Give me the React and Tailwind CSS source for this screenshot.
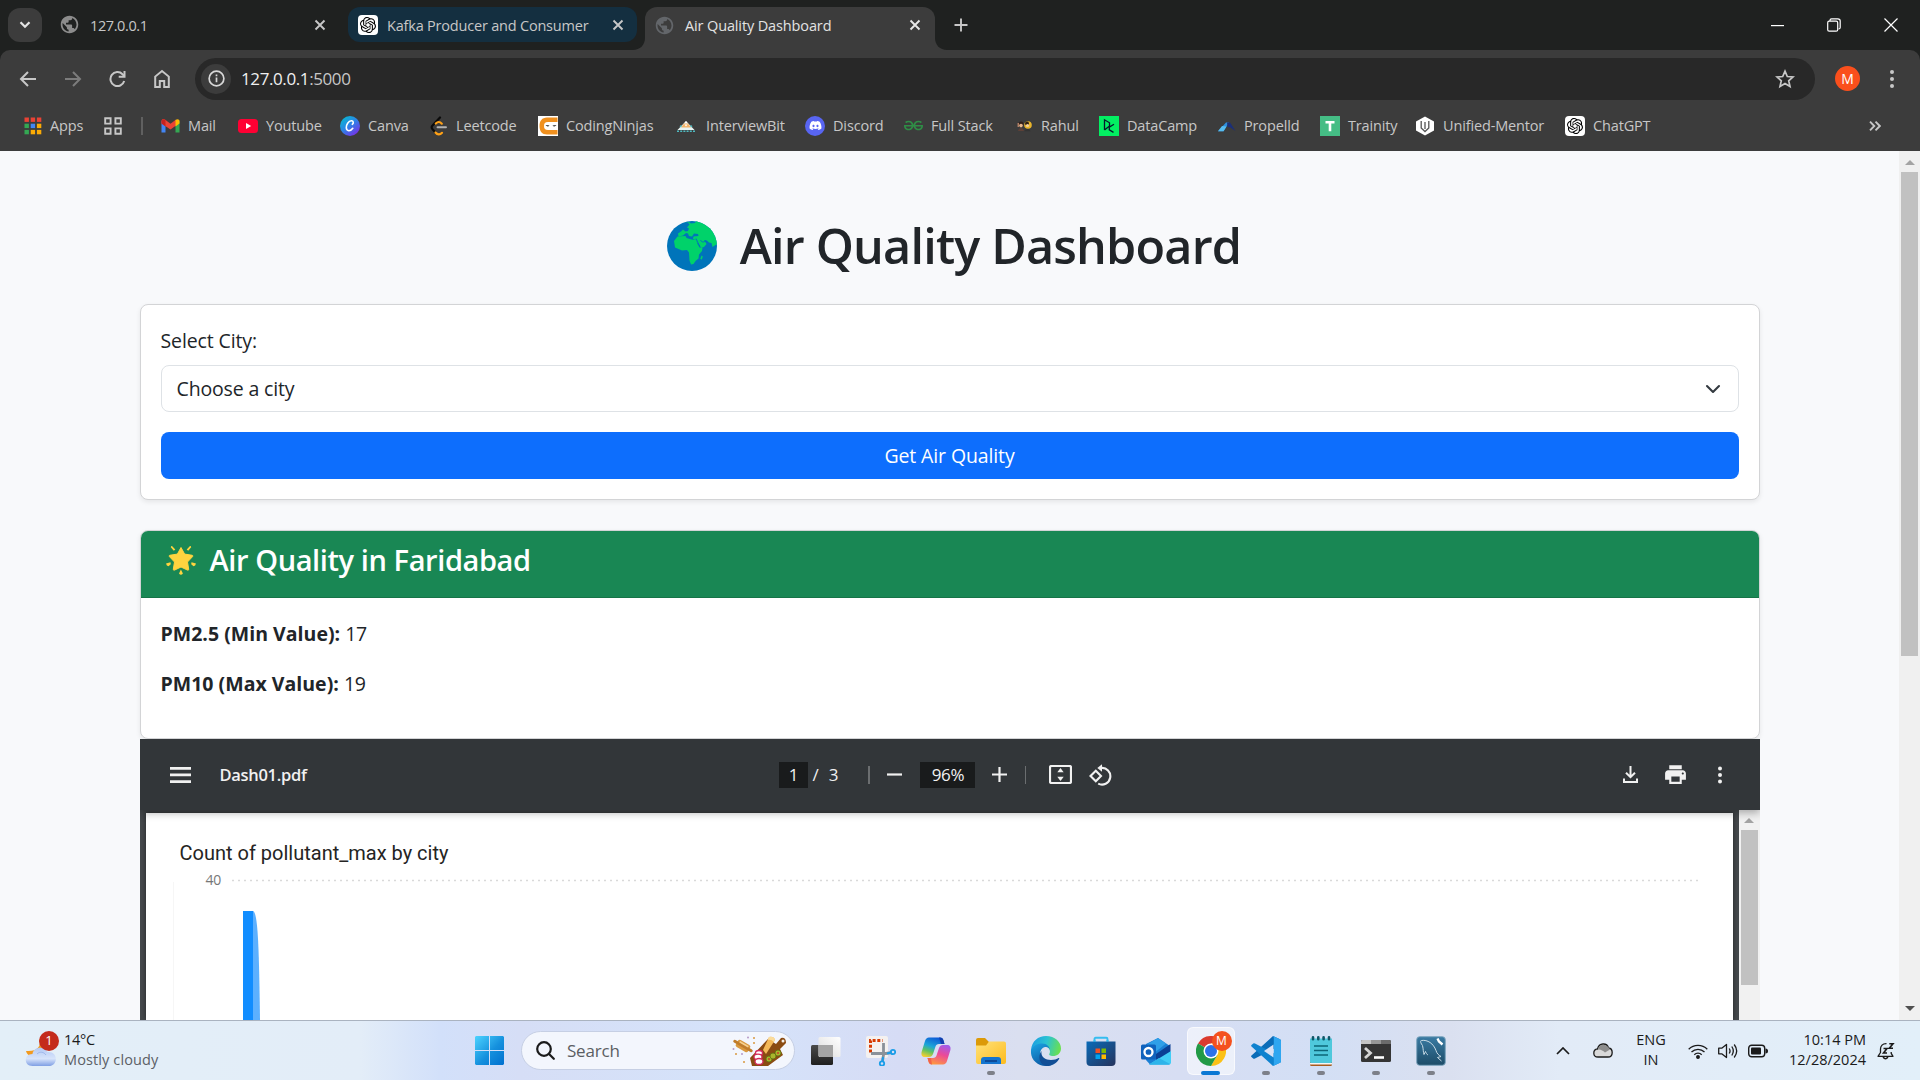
import React from 'react';
import { SiOpenai, SiGeeksforgeeks } from 'react-icons/si';
import { FaDiscord } from 'react-icons/fa';
import { MdPublic, MdPrint } from 'react-icons/md';

/* ---------- browser chrome icons ---------- */

const Close = ({ className = '' }) => (
  <svg viewBox="0 0 12 12" className={`h-3 w-3 shrink-0 ${className}`} stroke="currentColor" strokeWidth="1.9" fill="none">
    <path d="M1.5 1.5l9 9M10.5 1.5l-9 9" />
  </svg>
);

const GptBadge = () => (
  <span className="flex h-5 w-5 shrink-0 items-center justify-center rounded bg-white text-black">
    <SiOpenai size={16} />
  </span>
);

function TabStrip() {
  return (
    <div className="flex h-[50px] items-start bg-[#1f2120] text-[14.5px] text-[#c7c7c7]">
      <div className="mt-2 ml-2 flex h-[34px] w-[34px] items-center justify-center rounded-xl bg-[#3c3c3c]">
        <svg viewBox="0 0 12 8" className="h-2 w-3" fill="none" stroke="#e3e3e3" strokeWidth="2.2">
          <path d="M1.5 1.2L6 5.8l4.500-4.600" />
        </svg>
      </div>
      <div className="mt-[7px] ml-[9px] flex h-[35px] w-[289px] items-center pr-[14px] pl-2">
        <MdPublic size={21} className="shrink-0 text-[#8c8c8c]" />
        <span className="ml-[10px] flex-1 pt-[2px] tracking-[-0.4px]">127.0.0.1</span>
        <Close className="text-[#c7c7c7]" />
      </div>
      <div className="mt-[7px] ml-[8px] flex h-[35px] w-[289px] items-center rounded-[12px] bg-[#142f40] pr-[13px] pl-[10px]">
        <GptBadge />
        <span className="ml-[9px] flex-1 pt-[2px] tracking-[-0.2px] whitespace-nowrap">Kafka Producer and Consumer</span>
        <Close className="text-[#c7c7c7]" />
      </div>
      <div className="mt-[7px] flex h-[43px] items-end">
        <svg viewBox="0 0 12 12" className="ml-[-4px] h-3 w-3" fill="#3c3c3c">
          <path d="M12 0v12H0C7 12 12 7 12 0z" />
        </svg>
        <div className="flex h-[43px] w-[290px] items-start rounded-t-[12px] bg-[#3c3c3c] pt-[1px] pl-[9px]">
          <div className="flex h-[34px] flex-1 items-center pr-[14px] text-[#e3e3e3]">
            <MdPublic size={21} className="shrink-0 text-[#63666a]" />
            <span className="ml-[10px] flex-1 pt-[2px] tracking-[-0.13px]">Air Quality Dashboard</span>
            <Close className="text-[#e8e8e8]" />
          </div>
        </div>
        <svg viewBox="0 0 12 12" className="h-3 w-3" fill="#3c3c3c">
          <path d="M0 0v12h12C5 12 0 7 0 0z" />
        </svg>
      </div>
      <svg viewBox="0 0 14 14" className="mt-[18px] ml-[7px] h-3.5 w-3.5" stroke="#c7c7c7" strokeWidth="1.9">
        <path d="M7 0.500v13M0.500 7h13" />
      </svg>
      <div className="mt-[18px] mr-[22px] ml-auto flex h-[14px] items-center gap-[43px]">
        <svg viewBox="0 0 13 13" className="h-[13px] w-[13px]" stroke="#fff" strokeWidth="1.200">
          <path d="M0 6.600h13" />
        </svg>
        <svg viewBox="0 0 14 14" className="h-[14px] w-[14px]" stroke="#fff" strokeWidth="1.200" fill="none">
          <rect x="0.700" y="3.200" width="10" height="10" rx="1.500" />
          <path d="M3 3V2.200Q3 0.800 4.500 0.800h6.300Q13.200 0.800 13.200 3v6.500Q13.200 11 11.500 11" />
        </svg>
        <svg viewBox="0 0 14 14" className="h-[14px] w-[14px]" stroke="#fff" strokeWidth="1.200">
          <path d="M0.500 0.500l13 13M13.500 0.500l-13 13" />
        </svg>
      </div>
    </div>
  );
}

function AddressBar() {
  return (
    <div className="flex h-[57px] items-center pl-[19px]">
      <svg viewBox="0 0 18 18" className="h-[18px] w-[18px]" stroke="#c7c7c7" strokeWidth="2" fill="none">
        <path d="M17 9H2.500M9 2L2 9l7 7" />
      </svg>
      <svg viewBox="0 0 18 18" className="ml-[27px] h-[18px] w-[18px]" stroke="#7c7c7c" strokeWidth="2" fill="none">
        <path d="M1 9h14.500M9 2l7 7-7 7" />
      </svg>
      <svg viewBox="0 0 18 18" className="ml-[27px] h-[18px] w-[18px]" stroke="#c7c7c7" strokeWidth="2" fill="none">
        <path d="M15.200 11A7 7 0 1 1 13.500 4.200L15.500 6.200" />
        <path d="M15.500 1v5.800h-5.800" />
      </svg>
      <svg viewBox="0 0 18 20" className="ml-[26px] h-5 w-[18px]" stroke="#c7c7c7" strokeWidth="2" fill="none">
        <path d="M2.200 18V7.600L9 2l6.800 5.600V18h-4.600v-6H6.800v6z" />
      </svg>
      <div className="ml-[24px] flex h-[42px] w-[1620px] items-center rounded-full bg-[#282828] pr-[20px] pl-[6px]">
        <div className="flex h-[30px] w-[30px] items-center justify-center rounded-full bg-[#3c3c3c]">
          <svg viewBox="0 0 18 18" className="h-[17px] w-[17px]" fill="none" stroke="#d8d8d8" strokeWidth="1.800">
            <circle cx="9" cy="9" r="7.800" />
            <path d="M9 8v5M9 4.800v1.900" />
          </svg>
        </div>
        <div className="ml-[10px] flex-1 pt-px text-[17px] tracking-[-0.400px] text-[#c7c7c7]">
          <span className="text-[#f0f0f0]">127.0.0.1</span>:5000
        </div>
        <svg viewBox="0 0 20 20" className="h-5 w-5" fill="none" stroke="#c7c7c7" strokeWidth="1.700">
          <path d="M10 2.200l2.300 5.300 5.700.5-4.300 3.800 1.300 5.600-5-3-5 3 1.300-5.600L2 8l5.700-.5z" />
        </svg>
      </div>
      <div className="ml-[20px] flex h-[25px] w-[25px] items-center justify-center rounded-full bg-[#fa4f1c] text-[14px] text-white">M</div>
      <svg viewBox="0 0 4 20" className="ml-[30px] h-5 w-1" fill="#c7c7c7">
        <circle cx="2" cy="3" r="2" />
        <circle cx="2" cy="10" r="2" />
        <circle cx="2" cy="17" r="2" />
      </svg>
    </div>
  );
}

/* ---------- bookmark icons ---------- */

const AppsGrid = () => {
  const c = ['#ea4335', '#ea4335', '#ea4335', '#34a853', '#4285f4', '#fbab05', '#34a853', '#fbab05', '#fbab05'];
  return (
    <svg viewBox="0 0 20 20" className="h-5 w-5">
      {c.map((f, i) => (
        <rect key={i} x={2.500 + (i % 3) * 6.200} y={1.500 + Math.floor(i / 3) * 6.200} width="4.400" height="4.400" fill={f} />
      ))}
    </svg>
  );
};
const GmailIcon = () => (
  <svg viewBox="0 0 20 20" className="h-5 w-5">
    <path d="M1.500 5v11.500h4V9z" fill="#4285f4" />
    <path d="M19.500 5v11.500h-4V9z" fill="#34a853" />
    <path d="M1.500 5c0-2 2-2.600 3.400-1.500L10.500 7.700l5.600-4.200V9.500L10.500 13.600 1.500 7.500z" fill="#ea4335" />
    <path d="M15.500 3.900C17.500 2.400 19.500 3.400 19.500 5v2.500l-4 3z" fill="#fbbc04" />
    <path d="M1.500 5.500C1.500 3 4 2.800 5.500 3.900v6.600l-4-3z" fill="#c5221f" />
  </svg>
);
const YoutubeIcon = () => (
  <svg viewBox="0 0 20 20" className="h-5 w-5">
    <rect x="0" y="3" width="20" height="14" rx="3.500" fill="#ff0033" />
    <path d="M8 7l5.200 3L8 13z" fill="#fff" />
  </svg>
);
const CanvaIcon = () => (
  <svg viewBox="0 0 20 20" className="h-5 w-5">
    <defs>
      <linearGradient id="canva" x1="0" y1="0" x2="0.800" y2="1">
        <stop offset="0" stopColor="#00c4cc" />
        <stop offset="0.500" stopColor="#2a86e6" />
        <stop offset="1" stopColor="#7d2ae8" />
      </linearGradient>
    </defs>
    <circle cx="10" cy="10" r="10" fill="url(#canva)" />
    <path d="M12.300 8.300c1.600-1 1.200-3.600-.900-3.500-3 .2-5.300 4-5.100 7 .2 3.600 4 4 6.500.5" fill="none" stroke="#fff" strokeWidth="1.600" strokeLinecap="round" />
  </svg>
);
const LeetcodeIcon = () => (
  <svg viewBox="0 0 20 20" className="h-5 w-5" fill="none" strokeWidth="2.200" strokeLinecap="round">
    <path d="M12 1.500L4.500 9.500c-1.200 1.200-1.200 2.500 0 3.700l3 3.300" stroke="#0b0b0b" />
    <path d="M7.500 16.500c2 2.500 4.500 2.500 6.500.3M7.800 7.500c2-2 4-2 6 .2" stroke="#ffa116" />
    <path d="M9.500 11.200H18" stroke="#b3b3b3" strokeWidth="1.900" />
  </svg>
);
const NinjaIcon = () => (
  <svg viewBox="0 0 20 20" className="h-5 w-5">
    <rect width="20" height="20" fill="#fff" />
    <path d="M19.500 1.500H9C4 1.500 1.500 5 1.500 10S4 18.500 9 18.500h10.500V14H10c-3 0-4-1.500-4-4s1-4 4-4h9.500z" fill="#f0901e" />
    <path d="M7.500 9l4 .6q-2 2-4-.6zM18.500 9l-4 .6q2 2 4-.6z" fill="#222" />
  </svg>
);
const InterviewBitIcon = () => (
  <svg viewBox="0 0 20 20" className="ml-[-2px] h-5 w-5">
    <path d="M10 5L1.500 14h17z" fill="#e8f3f2" />
    <path d="M8 7.500h4l3 4H5z" fill="#f2b36a" />
    <path d="M10 5l-1.500 2h3zM8.500 8.500h3l-1.500 2z" fill="#fff" />
    <path d="M5.500 9.500l-2 2M14.500 9.500l2 2M1 15.200h18" stroke="#4fb9c0" strokeWidth="1.600" strokeDasharray="2 1.200" />
  </svg>
);
const DiscordIcon = () => (
  <span className="flex h-5 w-5 items-center justify-center rounded-full bg-[#5865f2] text-white">
    <FaDiscord size={13} />
  </span>
);
const GfgIcon = () => <SiGeeksforgeeks size={19} className="ml-px text-[#2f8d46]" />;
const RahulIcon = () => (
  <svg viewBox="0 0 20 20" className="h-5 w-5">
    <circle cx="8" cy="8" r="2.600" fill="#33201a" />
    <circle cx="8" cy="9.600" r="1.800" fill="#e8b98e" />
    <path d="M5 15c1-4 5-4 6 0z" fill="#5d4037" />
    <circle cx="15" cy="9" r="3.800" fill="#e9b52b" />
    <circle cx="14" cy="7.600" r="2" fill="#2e1f14" />
    <circle cx="14.500" cy="9.500" r="1.600" fill="#f2cf9c" />
    <path d="M11.500 15.200c1-3 5-3 6 0z" fill="#333" />
    <path d="M5.200 7v4" stroke="#e8a27f" />
  </svg>
);
const DataCampIcon = () => (
  <svg viewBox="0 0 20 20" className="h-5 w-5">
    <rect width="20" height="20" fill="#03ef62" />
    <path d="M5.500 14V3.800l5 3V10l-5 4M15 8.200l-4.700 3v2.600l4.200 2.600" fill="none" stroke="#05192d" strokeWidth="1.300" />
  </svg>
);
const PropelldIcon = () => (
  <svg viewBox="0 0 20 20" className="h-5 w-5">
    <path d="M10 6.500h3L7.500 15.200H2z" fill="#2f8fdd" />
    <path d="M6 10l4.500.4-3 4.800H2z" fill="#56bdf0" />
    <path d="M11 6.500h3L19.500 15l-5-3.500-3-.5z" fill="#1b2f78" />
  </svg>
);
const TrainityIcon = () => (
  <svg viewBox="0 0 20 20" className="h-5 w-5">
    <rect width="20" height="20" fill="#45bd85" />
    <path d="M5.500 6.200h9M10 6.200v9" stroke="#fff" strokeWidth="2.600" />
  </svg>
);
const MentorIcon = () => (
  <svg viewBox="0 0 20 20" className="h-5 w-5">
    <path d="M10 .5l9 5v9l-9 5-9-5v-9z" fill="#fff" />
    <path d="M6.200 5v7l3.800 3.500L13.800 12V5M10 6v7" fill="none" stroke="#555" strokeWidth="1.300" />
  </svg>
);

const BOOKMARKS = [
  { label: 'Mail', Icon: GmailIcon, w: 'w-[78px]' },
  { label: 'Youtube', Icon: YoutubeIcon, w: 'w-[102px]' },
  { label: 'Canva', Icon: CanvaIcon, w: 'w-[88px]' },
  { label: 'Leetcode', Icon: LeetcodeIcon, w: 'w-[110px]' },
  { label: 'CodingNinjas', Icon: NinjaIcon, w: 'w-[140px]' },
  { label: 'InterviewBit', Icon: InterviewBitIcon, w: 'w-[127px]' },
  { label: 'Discord', Icon: DiscordIcon, w: 'w-[98px]' },
  { label: 'Full Stack', Icon: GfgIcon, w: 'w-[110px]' },
  { label: 'Rahul', Icon: RahulIcon, w: 'w-[86px]' },
  { label: 'DataCamp', Icon: DataCampIcon, w: 'w-[117px]' },
  { label: 'Propelld', Icon: PropelldIcon, w: 'w-[104px]' },
  { label: 'Trainity', Icon: TrainityIcon, w: 'w-[95px]' },
  { label: 'Unified-Mentor', Icon: MentorIcon, w: 'w-[150px]' },
  { label: 'ChatGPT', Icon: GptBadge, w: 'w-[100px]' },
];

const Bookmark = ({ label, Icon, w }) => (
  <div className={`flex shrink-0 items-center ${w}`}>
    <span className="flex w-5 shrink-0 items-center">
      <Icon />
    </span>
    <span className="ml-[8px] whitespace-nowrap">{label}</span>
  </div>
);

function BookmarksBar() {
  return (
    <div className="flex h-[44px] items-center pb-[7px] pl-[22px] text-[14.500px] tracking-[-0.150px] text-[#c7c7c7]">
      <Bookmark label="Apps" Icon={AppsGrid} w="w-[82px]" />
      <svg viewBox="0 0 18 18" className="h-[18px] w-[18px]" fill="none" stroke="#c7c7c7" strokeWidth="1.900">
        <path d="M1.200 1.200h5.400v5.400H1.200zM11.400 1.200h5.400v5.400h-5.400zM1.200 11.400h5.400v5.400H1.200zM11.400 11.400h5.400v5.400h-5.400z" />
      </svg>
      <div className="mr-[17px] ml-[19px] h-[18px] w-[2px] bg-[#606060]" />
      {BOOKMARKS.map((b) => (
        <Bookmark key={b.label} {...b} />
      ))}
      <svg viewBox="0 0 12 10" className="mr-[39px] ml-auto h-[10px] w-3" fill="none" stroke="#c7c7c7" strokeWidth="1.900">
        <path d="M1 .7L5.300 5 1 9.300M6.500.7L10.800 5 6.500 9.300" />
      </svg>
    </div>
  );
}

/* ---------- web page ---------- */

const Earth = () => (
  <svg viewBox="0 0 50 50" className="h-[50px] w-[50px]">
    <defs>
      <clipPath id="globe">
        <circle cx="25" cy="25" r="25" />
      </clipPath>
    </defs>
    <circle cx="25" cy="25" r="25" fill="#0074ba" />
    <g clipPath="url(#globe)" fill="#00d26a">
      <path d="M17 2l4-.5 1.500 2-2.500 3 2 1-1 2.500-2.500.5-2.500-2-2 2-3 2 .5 3 4.500-1 3-2.500 2 .5 1 2.500 3 .5 2-3 4 .5.5 2-5 .5-.5 2.500 3 1 .5 2.500 3 1.500 1.500 4 3-1 2.500-3-2.500-4 3 .5 2 2 2.500.5 1 4 3-2 2-1V0H29l-1 2-4 .5-2-1.500z" />
      <path d="M7 20l3.500-4.500 8-.5 1 2 5 1.500 4.500.5 1.500 4 2 3.500 3 .5-.5 3-3 3.500-.5 4-3 2.500-2 3-2.500.5-1.500-4-.5-8-2-2.500-5 .5L8 26.500z" />
      <path d="M34.500 34.500l1.300 1-1 3-1.500-.5z" />
    </g>
    <path d="M30 19.500l2.500 4 2.500 2 4-2-2.500-4" fill="#00d26a" />
    <path d="M29 17.500l2.500 5.500M33.500 19c1 2.500 4 2.500 5 .5" stroke="#0074ba" strokeWidth="1" fill="none" />
  </svg>
);

const GlowStar = () => (
  <svg viewBox="0 0 30 30" className="h-[30px] w-[30px]" fill="#ffd43f">
    <path d="M15 2.500l3.600 6.600 7.700 1.200q1 .4.300 1.300L21.500 17l1.200 7.300q0 1.200-1.200.8L15 22l-6.500 3.100q-1.200.4-1.200-.8L8.500 17l-5.100-5.400q-.7-.9.300-1.300l7.700-1.200z" stroke="#ffd43f" strokeLinejoin="round" />
    <path d="M6 1l3.300 3.600-1.500 1.100L4.800 2.200Q5 .8 6 1zM24 1l-3.300 3.600 1.500 1.100 3-3.500Q25 .8 24 1zM0 18.500l4.500-1.200.3 2-2.300 2Q.5 21 0 18.500zM30 18.500l-4.500-1.200-.3 2 2.300 2Q29.500 21 30 18.500zM14.900 24.500l2 4Q15 31 13 28.500z" />
  </svg>
);

const Arrow = ({ down, className = '' }) => (
  <svg viewBox="0 0 10 5" className={`h-[5px] w-[10px] ${className}`}>
    <path d={down ? 'M0 0h10L5 5z' : 'M0 5h10L5 0z'} fill="currentColor" />
  </svg>
);

function PdfToolbar() {
  return (
    <div className="relative z-10 flex h-[71px] items-center bg-[#323639] text-[17px] text-[#f1f1f1] shadow-[0_3px_8px_rgba(0,0,0,0.300)]">
      <svg viewBox="0 0 21 16" className="ml-[30px] h-4 w-[21px]" fill="#f1f1f1">
        <path d="M0 0h21v2.700H0zM0 6.600h21v2.700H0zM0 13.200h21v2.700H0z" />
      </svg>
      <span className="ml-[29px] w-[559px] text-[16.500px] font-semibold tracking-[-0.300px]">Dash01.pdf</span>
      <span className="flex h-[26px] w-[29px] items-center justify-center bg-[#191b1c] pl-px">1</span>
      <span className="ml-[5px]">/</span>
      <span className="ml-[10px]">3</span>
      <span className="ml-[30px] h-[18px] w-[2px] bg-[#6b6e70]" />
      <svg viewBox="0 0 15 15" className="ml-[17px] h-[15px] w-[15px]" stroke="#f1f1f1" strokeWidth="2.200">
        <path d="M0 7.500h15" />
      </svg>
      <span className="ml-[18px] flex h-[26px] w-[55px] items-center justify-center bg-[#191b1c] tracking-[-0.300px]">96%</span>
      <svg viewBox="0 0 15 15" className="ml-[17px] h-[15px] w-[15px]" stroke="#f1f1f1" strokeWidth="2.200">
        <path d="M0 7.500h15M7.500 0v15" />
      </svg>
      <span className="ml-[18px] h-[18px] w-px bg-[#6b6e70]" />
      <svg viewBox="0 0 23 19" className="ml-[23px] h-[19px] w-[23px]">
        <rect x="1" y="1" width="21" height="17" rx="1.500" fill="none" stroke="#f1f1f1" strokeWidth="2.200" />
        <path d="M11.500 3l3.200 4.300H8.300zM11.500 16l3.200-4.300H8.300z" fill="#f1f1f1" />
      </svg>
      <svg viewBox="0 0 23 22" className="ml-[17px] h-[22px] w-[23px]" fill="none" stroke="#f1f1f1" strokeWidth="2.100">
        <path d="M1.500 12l5.300-5.300L12 12l-5.200 5.300z" />
        <path d="M12 4a8.300 8.300 0 1 1-2.800 15.600" />
        <path d="M13 .2v7.600L8.300 4z" fill="#f1f1f1" stroke="none" />
      </svg>
      <svg viewBox="0 0 15 17" className="ml-auto h-[17px] w-[15px]" fill="none" stroke="#f1f1f1" strokeWidth="2">
        <path d="M7.500 0v11M3 6.800l4.500 4.400L12 6.800M1 12.500V16h13v-3.500" />
      </svg>
      <MdPrint size={25} className="ml-[25px] text-[#f1f1f1]" />
      <svg viewBox="0 0 4 20" className="mr-[38px] ml-[30px] h-5 w-1" fill="#f1f1f1">
        <circle cx="2" cy="3.500" r="2" />
        <circle cx="2" cy="10" r="2" />
        <circle cx="2" cy="16.500" r="2" />
      </svg>
    </div>
  );
}

function PdfViewer() {
  return (
    <div className="h-[281px] overflow-hidden">
      <PdfToolbar />
      <div className="flex h-[210px] bg-[#45494c]">
        <div className="mt-[3px] ml-[6px] w-[1587px] bg-white shadow-[0_0_5px_rgba(0,0,0,0.500)]">
          <div className="pt-[25px] pl-[34px] font-[Roboto] text-[20px] leading-[30px] text-[#252423]">Count of pollutant_max by city</div>
          <svg viewBox="0 0 1587 152" className="block h-[152px] w-[1587px]">
            <path d="M86 12.500H1554" stroke="#d9d9d9" strokeWidth="1.500" strokeDasharray="2 4" />
            <path d="M27.500 14v138" stroke="#f6f6f6" />
            <rect x="97" y="43" width="10" height="109" fill="#118dff" />
            <path d="M107 43C112 44 113 80 114 152h-7z" fill="#5cb0ff" />
            <text x="75" y="17" textAnchor="end" className="fill-[#777] font-[Open_Sans] text-[14px] tracking-[-0.300px]">40</text>
          </svg>
        </div>
        <div className="ml-auto flex w-[21px] flex-col items-center bg-[#f1f1f1]">
          <Arrow className="mt-[8px] text-[#a3a3a3]" />
          <div className="mt-[7px] h-[155px] w-[17px] bg-[#c1c1c1]" />
        </div>
      </div>
    </div>
  );
}

function WebPage() {
  return (
    <div className="flex h-[869px] overflow-hidden bg-[#f8f9fb]">
      <div className="flex-1 text-[19.500px] leading-[30px] text-[#212529]">
        <div className="mx-auto w-[1620px]">
          <div className="flex h-[153px] justify-center pt-[64px] pl-[9px]">
            <div className="mt-[6px]">
              <Earth />
            </div>
            <h1 className="ml-[23px] text-[48.500px] leading-[60px] font-semibold tracking-[-0.800px]">Air Quality Dashboard</h1>
          </div>
          <div className="h-[196px] rounded-lg border border-[#d3d4d6] bg-white px-5 pt-[21px] pb-5 shadow-[0_2px_5px_rgba(0,0,0,0.080)]">
            <div className="tracking-[-0.120px]">Select City:</div>
            <div className="mt-[9px] flex h-[47px] items-center justify-between rounded-lg border border-[#dee2e6] pr-[17px] pl-[15px]">
              <span className="tracking-[-0.150px]">Choose a city</span>
              <svg viewBox="0 0 16 16" className="h-[16px] w-[16px]" fill="none" stroke="#343a40" strokeWidth="2.100" strokeLinecap="round" strokeLinejoin="round">
                <path d="M2 5l6 6 6-6" />
              </svg>
            </div>
            <div className="mt-5 flex h-[47px] items-center justify-center rounded-lg bg-[#0d6efd] tracking-[-0.120px] text-white">Get Air Quality</div>
          </div>
          <div className="mt-[30px] h-[209px] rounded-lg border border-[#d3d4d6] bg-white shadow-[0_2px_5px_rgba(0,0,0,0.080)]">
            <div className="flex h-[67px] rounded-t-[7px] border-b border-[#167447] bg-[#198754] pl-[25px] text-white">
              <div className="mt-[14px]">
                <GlowStar />
              </div>
              <h3 className="mt-[11px] ml-[14px] text-[29px] leading-[36px] font-semibold tracking-[-0.400px]">Air Quality in Faridabad</h3>
            </div>
            <div className="space-y-5 px-5 pt-[21px]">
              <p>
                <strong className="tracking-[0.020px]">PM2.5 (Min Value):</strong> <span className="tracking-[-0.400px]">17</span>
              </p>
              <p>
                <strong className="tracking-[0.020px]">PM10 (Max Value):</strong> <span className="tracking-[-0.400px]">19</span>
              </p>
            </div>
          </div>
          <PdfViewer />
        </div>
      </div>
      <div className="flex w-[21px] flex-col items-center bg-[#f0f0f0]">
        <Arrow className="mt-[9px] text-[#a3a3a3]" />
        <div className="mt-[7px] h-[484px] w-[17px] bg-[#c1c1c1]" />
        <Arrow down className="mt-auto mb-[9px] text-[#505050]" />
      </div>
    </div>
  );
}

/* ---------- taskbar icons ---------- */

const WeatherIcon = () => (
  <svg viewBox="0 0 34 34" className="h-[34px] w-[34px]">
    <defs>
      <linearGradient id="cloud" x1="0" y1="0" x2="0" y2="1">
        <stop offset="0" stopColor="#b4c9f4" />
        <stop offset="0.600" stopColor="#d7e4fb" />
        <stop offset="1" stopColor="#7f9fe4" />
      </linearGradient>
    </defs>
    <path d="M14 5c3 7-2 13-13 12 1 5 8 8 13 5s8-11 0-17z" fill="#f29a1f" />
    <path d="M7.500 32c-9 0-9-12 0-12 1-8 13-8 15-2 11-1 11 14 1 14z" fill="url(#cloud)" />
    <path d="M12 20c3-3 7-2 9 1" stroke="#8fabe6" opacity="0.700" fill="none" />
  </svg>
);

const StartIcon = () => (
  <svg viewBox="0 0 29 29" className="h-[29px] w-[29px]">
    <defs>
      <linearGradient id="start" gradientUnits="userSpaceOnUse" x1="0" y1="0" x2="29" y2="29">
        <stop offset="0" stopColor="#4cd3ff" />
        <stop offset="0.550" stopColor="#1590dd" />
        <stop offset="1" stopColor="#0070cf" />
      </linearGradient>
    </defs>
    <path d="M1 0h13v14H0V1zM15 0h13l1 1v13H15zM0 15h14v14H1l-1-1zM15 15h14v13l-1 1H15z" fill="url(#start)" />
  </svg>
);

const FoodArt = () => (
  <svg viewBox="0 0 56 30" className="h-[30px] w-[56px]">
    <path d="M18 22L36 3l8 5 5-6q5-1 5 5l-6 6 3 6-15 11H20z" fill="#8a4b12" />
    <circle cx="51" cy="5" r="1.500" fill="#f5f0ea" />
    <path d="M31 14L37 1q5-1 6 3l-9 14z" fill="#f3b857" />
    <path d="M37 1q5-1 6 3l-1 2q-3-3-6-2z" fill="#fbdc9b" />
    <g transform="rotate(30 11 10)">
      <rect x="4" y="6" width="14" height="8" rx="2" fill="#d9983f" />
      <rect x="0" y="8.500" width="22" height="3" rx="1.500" fill="#c07c2b" />
      <path d="M6 8h10" stroke="#f6d08f" strokeWidth="1.500" />
    </g>
    <g fill="#fff" stroke="#d42a5c" strokeWidth="1.300">
      <ellipse cx="27" cy="17" rx="3.500" ry="2.500" />
      <ellipse cx="26" cy="21" rx="4" ry="2.800" />
      <ellipse cx="27" cy="25.500" rx="4" ry="3" />
    </g>
    <g fill="#a8b52c" stroke="#5f7013" strokeWidth="0.800">
      <circle cx="37" cy="23" r="3" />
      <circle cx="41" cy="20" r="3" />
      <circle cx="46" cy="17" r="3" />
    </g>
    <circle cx="37" cy="23" r="1" fill="#c8402a" />
    <circle cx="46" cy="17" r="1" fill="#c8402a" />
    <g fill="#d9983f">
      <circle cx="22" cy="2" r="1" />
      <circle cx="22" cy="7" r="1" />
      <circle cx="4" cy="18" r="1" />
      <circle cx="12" cy="26" r="1" />
    </g>
    <g fill="#b79ac8">
      <circle cx="16" cy="1.500" r="1" />
      <circle cx="1.500" cy="13" r="1" />
      <circle cx="10" cy="18" r="1" />
    </g>
  </svg>
);

const svgCls = 'h-[30px] w-[30px]';

const TaskView = () => (
  <svg viewBox="0 0 30 30" className={svgCls}>
    <defs>
      <linearGradient id="tvd" x1="0" y1="0" x2="0" y2="1">
        <stop offset="0" stopColor="#4a4a4a" />
        <stop offset="1" stopColor="#1f1f1f" />
      </linearGradient>
      <linearGradient id="tvl" x1="1" y1="0" x2="0" y2="1">
        <stop offset="0" stopColor="#ffffff" />
        <stop offset="1" stopColor="#dcdcdc" />
      </linearGradient>
    </defs>
    <rect x="0" y="9" width="22" height="20" rx="1.500" fill="url(#tvd)" />
    <rect x="7.500" y="1" width="22" height="20" rx="1.500" fill="url(#tvl)" />
    <path d="M7.500 9H22v12H9l-1.500-1.500z" fill="#a4a4a4" />
  </svg>
);
const Snip = () => (
  <svg viewBox="0 0 30 30" className={svgCls}>
    <rect x="0" y="0" width="22" height="22" rx="2" fill="#f4f1f0" />
    <path d="M4.500 16.500V4.500h12" fill="none" stroke="#d83b01" strokeWidth="3" strokeDasharray="3 1.700" />
    <path d="M17.500 7v12l-1 6M5 17.500h15l6-1" fill="none" stroke="#8a9199" strokeWidth="2.800" />
    <circle cx="27" cy="16" r="2.200" fill="none" stroke="#1a9de8" strokeWidth="1.800" />
    <circle cx="16" cy="27.500" r="2.200" fill="none" stroke="#1a9de8" strokeWidth="1.800" />
    <path d="M21 17.500l4-1M17 21l-.6 4.500" stroke="#1a9de8" strokeWidth="2" />
  </svg>
);
const Copilot = () => (
  <svg viewBox="0 0 30 30" className={svgCls}>
    <defs>
      <linearGradient id="cp1" x1="0.600" y1="0" x2="0.200" y2="1">
        <stop offset="0" stopColor="#0d5bd7" />
        <stop offset="0.450" stopColor="#1ba6d8" />
        <stop offset="0.700" stopColor="#5fc262" />
        <stop offset="1" stopColor="#f6cf2f" />
      </linearGradient>
      <linearGradient id="cp2" x1="0.700" y1="0" x2="0.300" y2="1">
        <stop offset="0" stopColor="#a35ae8" />
        <stop offset="0.450" stopColor="#ec4a97" />
        <stop offset="1" stopColor="#ff9a3d" />
      </linearGradient>
    </defs>
    <path d="M8 1.500h11c2 0 3 1 3.500 3L23.500 8H18c-2 0-3 1-3.500 2.500L12 18c-.8 2-2 3-4 3H4C1 21 0 19 .6 16L4 5c.7-2 2-3.500 4-3.500z" fill="url(#cp1)" />
    <path d="M22 28.500H11c-2 0-3-1-3.500-3L6.500 22H12c2 0 3-1 3.500-2.500L18 12c.8-2 2-3 4-3h4c3 0 4 2 3.400 5L26 25c-.7 2-2 3.500-4 3.500z" fill="url(#cp2)" />
    <path d="M18 1.500h1c2 0 3 1 3.500 3L23.500 8H20z" fill="#123fae" />
    <path d="M11 28.500c-2 0-3-1-3.500-3L6.500 22H10z" fill="#f2634a" />
  </svg>
);
const Explorer = () => (
  <svg viewBox="0 0 30 30" className={svgCls}>
    <defs>
      <linearGradient id="fold" x1="0" y1="0" x2="1" y2="1">
        <stop offset="0" stopColor="#ffe27a" />
        <stop offset="1" stopColor="#fdbb1d" />
      </linearGradient>
    </defs>
    <path d="M0 4q0-2 2-2h7l4 4h12v4H0z" fill="#dc9a08" />
    <path d="M0 9.500h10L13 5.500h15q2 0 2 2V26q0 2-2 2H2q-2 0-2-2z" fill="url(#fold)" />
    <path d="M5 28v-4q0-3 3-3h14q3 0 3 3v4z" fill="#1474cf" />
    <path d="M9 25h12" stroke="#0b3f8c" strokeWidth="1.600" />
  </svg>
);
const Edge = () => (
  <svg viewBox="0 0 30 30" className={svgCls}>
    <defs>
      <linearGradient id="ed1" x1="0" y1="0.300" x2="1" y2="0.500">
        <stop offset="0" stopColor="#1b9de2" />
        <stop offset="0.500" stopColor="#2bc3d2" />
        <stop offset="1" stopColor="#6be04f" />
      </linearGradient>
      <linearGradient id="ed2" x1="0" y1="0" x2="0.500" y2="1">
        <stop offset="0" stopColor="#1ba5e4" />
        <stop offset="1" stopColor="#0c59a4" />
      </linearGradient>
    </defs>
    <path d="M0 14C1 5 7 0 15 0c9 0 15 6 15 12.500 0 5-4 7.500-8 7.500-3 0-4.500-1-3.500-2.500C20 15 18 10 12.500 10 6 10 1 14 0 19z" fill="url(#ed1)" />
    <path d="M0 15c1-5 6-7.500 11-7.500 5 0 8 3.500 8 7 0-2-2.500-4-5-3.500-4 1-6 5-4 9.500 2 5 8 9 13 7.500-3 1.500-5 2-8 2C6 30-.5 23 0 15z" fill="url(#ed2)" />
    <path d="M10.500 15c-1 6 4 9 9.500 9 3 0 6-1 7.500-2 .5-.3 1 .2.700.7C26 27 21 30 15.500 30 9 29 6 21 10.500 15z" fill="#124f96" />
  </svg>
);
const Store = () => (
  <svg viewBox="0 0 30 30" className={svgCls}>
    <defs>
      <linearGradient id="sto" x1="0" y1="0" x2="1" y2="1">
        <stop offset="0" stopColor="#0a6bb8" />
        <stop offset="1" stopColor="#26335c" />
      </linearGradient>
    </defs>
    <path d="M8.500 8V3q0-1.200 1.200-1.200h10.600q1.200 0 1.200 1.200v5" fill="none" stroke="#35bdf0" strokeWidth="1.900" />
    <path d="M.5 5.500h29V26q0 4-4 4h-21q-4 0-4-4z" fill="url(#sto)" />
    <path d="M8.500 5.500V4M21.500 5.500V4" stroke="#35bdf0" strokeWidth="1.900" />
    <path d="M9.500 12.500H14V17H9.500z" fill="#f25022" />
    <path d="M15.500 12.500H20V17h-4.500z" fill="#7fba00" />
    <path d="M9.500 18.500H14V23H9.500z" fill="#00a4ef" />
    <path d="M15.500 18.500H20V23h-4.500z" fill="#ffb900" />
  </svg>
);
const Outlook = () => (
  <svg viewBox="0 0 30 30" className={svgCls}>
    <path d="M5 8L17 2l12 8v17q0 1.500-1.500 1.500H9L5 24z" fill="#1a7fd4" />
    <path d="M5 9L17 2l8 5.500L12 18z" fill="#2f9fe8" />
    <path d="M29.500 8L15 18v8l14.500-10z" fill="#0b3f94" />
    <path d="M30 15L8 28.500h20q2 0 2-2z" fill="#42cdf6" />
    <path d="M8 28.500L18 22l11 6-1 .5z" fill="#2db4ea" />
    <rect x="0" y="8.500" width="15" height="15" rx="1.500" fill="#0f62bd" />
    <circle cx="7.500" cy="16" r="4" fill="none" stroke="#fff" strokeWidth="2.300" />
  </svg>
);
const Chrome = () => (
  <svg viewBox="0 0 30 30" className={svgCls}>
    <path d="M15 15L2 7.500A15 15 0 0 1 28 7.500H15z" fill="#db3a2e" />
    <path d="M15 15l6.500 3.700L15 30A15 15 0 0 0 28 7.500H15z" fill="#fbc116" />
    <path d="M15 15l6.500 3.700L15 30A15 15 0 0 1 2 7.500z" fill="#229a46" />
    <circle cx="15" cy="15" r="7.500" fill="#fff" />
    <circle cx="15" cy="15" r="6" fill="#2d72e8" />
  </svg>
);
const VsCode = () => (
  <svg viewBox="0 0 30 30" className={svgCls}>
    <path d="M22 0l7 3.200q1 .5 1 1.500V9L4 22.500q-1 .6-1.800 0L.5 21q-.8-.8 0-1.500z" fill="#0a6cb8" />
    <path d="M22 30l7-3.200q1-.5 1-1.500V21L4 7.500q-1-.6-1.800 0L.5 9q-.8.800 0 1.500z" fill="#0f82cf" />
    <path d="M22.500 8.500L13 15l9.500 6.500z" fill="#d9e1f5" />
    <path d="M22 0l7 3.200q1 .5 1 1.500v20.600q0 1-1 1.500L22 30q.8-.6.800-2V2q0-1.400-.8-2z" fill="#2fa6f0" />
  </svg>
);
const Notepad = () => (
  <svg viewBox="0 0 30 30" className={svgCls}>
    <rect x="4" y="20" width="22" height="10" rx="1.500" fill="#a85a1c" />
    <path d="M4 27h22v1.500H4z" fill="#f5f5f5" />
    <path d="M4 2.500h22V26q0 1-1 1H5q-1 0-1-1z" fill="#4fc8dc" />
    <path d="M8 10h14M8 14.500h14M8 19h14" stroke="#0d6577" strokeWidth="1.600" />
    <path d="M7 1.300v2M12.300 1.300v2M17.600 1.300v2M23 1.300v2" stroke="#0e5869" strokeWidth="2.600" strokeLinecap="round" />
  </svg>
);
const Terminal = () => (
  <svg viewBox="0 0 30 30" className={svgCls}>
    <rect x="0" y="4" width="30" height="22" rx="1.500" fill="#353535" />
    <path d="M0 8V5.500Q0 4 1.500 4H10v4z" fill="#c4c4c4" />
    <path d="M10 4h10v4H10z" fill="#969696" />
    <path d="M20 4h8.500Q30 4 30 5.500V8H20z" fill="#6b6b6b" />
    <path d="M4 12l5.500 5L4 22" fill="none" stroke="#d6d6d6" strokeWidth="2.800" />
    <path d="M13 21.500h10" stroke="#fff" strokeWidth="2.600" />
  </svg>
);
const MySql = () => (
  <svg viewBox="0 0 30 30" className={svgCls}>
    <defs>
      <linearGradient id="mys" x1="0" y1="0" x2="0" y2="1">
        <stop offset="0" stopColor="#3a7ba3" />
        <stop offset="1" stopColor="#1d4c68" />
      </linearGradient>
    </defs>
    <rect x="0.700" y="0.700" width="28.600" height="28.600" rx="3" fill="url(#mys)" stroke="#7ea6bf" strokeWidth="1" />
    <path d="M5.500 4.500c-1.500 0-1 2.500 1 5 1 4 .5 6 1.500 9l1.500-3c.5 1.500 1.500 3 2.500 3.500M5.500 4.500c6-1 12 3 14.500 10 .8 3 2.500 4.500 5 6l-3.500 1 4 3.500" fill="none" stroke="#c9dbe6" strokeWidth="1" />
    <path d="M21.500 2.500l1.500 3 3.500 3" stroke="#fff" strokeWidth="2.400" fill="none" />
  </svg>
);

const PINNED = [
  { name: 'taskview', Icon: TaskView },
  { name: 'snip', Icon: Snip },
  { name: 'copilot', Icon: Copilot },
  { name: 'explorer', Icon: Explorer, running: true },
  { name: 'edge', Icon: Edge },
  { name: 'store', Icon: Store },
  { name: 'outlook', Icon: Outlook },
  { name: 'chrome', Icon: Chrome, active: true },
  { name: 'vscode', Icon: VsCode, running: true },
  { name: 'notepad', Icon: Notepad, running: true },
  { name: 'terminal', Icon: Terminal, running: true },
  { name: 'mysql', Icon: MySql, running: true },
];

function Tray() {
  return (
    <div className="ml-auto flex items-center text-[14.500px] leading-[20px] text-[#1b1b1b]">
      <svg viewBox="0 0 14 8" className="h-2 w-3.5" fill="none" stroke="#1b1b1b" strokeWidth="1.700">
        <path d="M1 7l6-6 6 6" />
      </svg>
      <svg viewBox="0 0 20 15" className="ml-[23px] h-[15px] w-5">
        <path d="M5 14C-.5 14-.5 6.500 4.500 6 6-.5 14-.5 15.500 5c5 .5 5 9-.5 9z" fill="#d9d9d9" stroke="#1b1b1b" strokeWidth="1.300" />
        <path d="M2 8c4-3 7-1 10 1.500l5-3C14 0 6 0 5 6.500 3 6.500 2 7 2 8z" fill="#8d8d8d" />
      </svg>
      <div className="ml-[16px] flex w-[44px] flex-col items-center pb-px">
        <span>ENG</span>
        <span>IN</span>
      </div>
      <svg viewBox="0 0 20 16" className="ml-[15px] h-4 w-5" fill="none" stroke="#1b1b1b" strokeWidth="1.300">
        <path d="M.7 6.200a13 13 0 0 1 18.600 0M3.500 9a9.200 9.200 0 0 1 13 0M6.300 11.700a5.300 5.300 0 0 1 7.400 0" />
        <circle cx="10" cy="14" r="1.300" fill="#1b1b1b" />
      </svg>
      <svg viewBox="0 0 20 18" className="ml-[10px] h-[18px] w-5" fill="none" stroke="#1b1b1b" strokeWidth="1.300">
        <path d="M.7 6.200h3L8.500 2.500v13l-4.800-3.700h-3zM11.200 6.500q1.700 2.500 0 5M13.800 4.500q3 4.500 0 9M16.200 2.500q5 6.500 0 13" strokeLinejoin="round" />
      </svg>
      <svg viewBox="0 0 20 14" className="ml-[10px] h-[14px] w-5">
        <rect x="0.700" y="1.200" width="16" height="11.600" rx="3" fill="none" stroke="#1b1b1b" strokeWidth="1.400" />
        <rect x="3" y="3.500" width="10" height="7" rx="1" fill="#1b1b1b" />
        <path d="M17.500 4.500q2.500 0 2.500 2.500t-2.500 2.500z" fill="#1b1b1b" />
      </svg>
      <div className="flex w-[98px] flex-col items-end pb-[2px]">
        <span>10:14 PM</span>
        <span>12/28/2024</span>
      </div>
      <svg viewBox="0 0 18 18" className="mr-[25px] ml-[11px] h-[18px] w-[18px]" fill="none" stroke="#1b1b1b" strokeWidth="1.300">
        <path d="M9.500 1.700C5.500 1.500 3.500 4 3.500 7v3.500L1 14.300h15l-1.800-3V10M6 15q2.500 3.500 5 0" strokeLinejoin="round" />
        <path d="M6.500 6.500h3.500l-3.500 4.500H10M12.300 1.700H16l-3.700 4.500H16" strokeWidth="1.600" />
      </svg>
    </div>
  );
}

function Taskbar() {
  return (
    <div className="flex h-[60px] items-center border-t border-[#aab3c0] bg-[linear-gradient(90deg,#e3eff8_0,#e3edf8_360px,#d2e0fa_440px,#d6def6_520px,#d5e3fa_740px,#d6dcf5_900px,#dadff0_1020px,#d7def3_1180px,#d3dff5_1320px,#dae0f0_1450px,#e2ebf7_1560px,#e2eff9_1920px)]">
      <div className="flex w-[475px] shrink-0 items-center pl-[25px]">
        <div className="relative">
          <WeatherIcon />
          <span className="absolute -top-[3px] left-[14px] flex h-5 w-5 items-center justify-center rounded-full bg-[#c42b1c] text-[13px] text-white">1</span>
        </div>
        <div className="ml-[5px] flex flex-col pb-[2px] text-[14.500px] leading-[20px]">
          <span className="tracking-[-0.300px] text-[#1b1b1b]">14°C</span>
          <span className="tracking-[0.120px] text-[#5c6066]">Mostly cloudy</span>
        </div>
      </div>
      <StartIcon />
      <div className="ml-[17px] flex h-[39px] w-[274px] shrink-0 items-center rounded-full border border-[#c6cfe4] bg-[#f3f6fd] pr-[6px] pl-[14px]">
        <svg viewBox="0 0 19 19" className="h-[19px] w-[19px]" fill="none" stroke="#1b1b1b" strokeWidth="2.200" strokeLinecap="round">
          <circle cx="8" cy="8" r="6.800" />
          <path d="M13 13l4.800 4.800" />
        </svg>
        <span className="ml-[12px] flex-1 text-[17px] tracking-[-0.200px] text-[#5b5e63]">Search</span>
        <FoodArt />
      </div>
      <div className="ml-[3px] flex">
        {PINNED.map(({ name, Icon, running, active }) => (
          <div key={name} className="flex w-[55px] justify-center">
            <div className={active ? 'relative flex h-12 w-12 flex-col items-center rounded-md border border-white/60 bg-white/55 pt-[8px]' : 'relative flex h-12 w-12 flex-col items-center pt-[9px]'}>
              <Icon />
              {active && <span className="absolute top-[3px] right-[2px] flex h-5 w-5 items-center justify-center rounded-full bg-[#f4511e] text-[12px] text-white">M</span>}
              {running && <span className="absolute bottom-0 h-1 w-2 rounded-full bg-[#7d8089]" />}
              {active && <span className="absolute bottom-[-1px] h-1 w-[19px] rounded-full bg-[#0a78d4]" />}
            </div>
          </div>
        ))}
      </div>
      <Tray />
    </div>
  );
}

export default function App() {
  return (
    <div className="h-[1080px] w-[1920px] overflow-hidden bg-[#1f2120] font-['Open_Sans','Noto_Sans',sans-serif]">
      <TabStrip />
      <div className="rounded-t-[10px] bg-[#3c3c3c]">
        <AddressBar />
        <BookmarksBar />
      </div>
      <WebPage />
      <Taskbar />
    </div>
  );
}
